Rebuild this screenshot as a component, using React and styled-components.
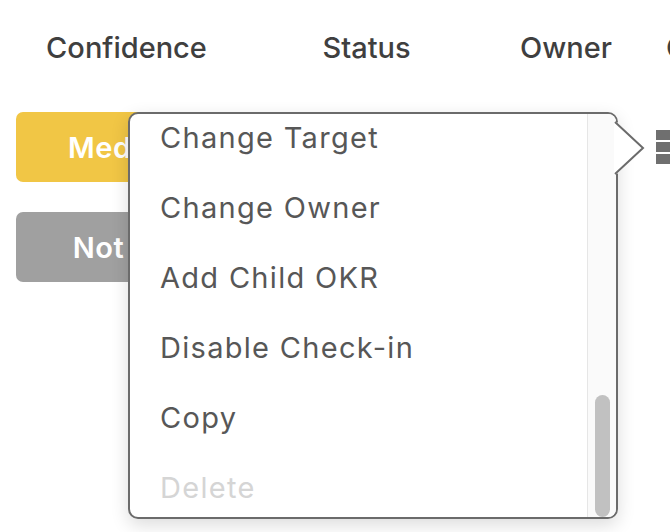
import React from "react";
import styled, { createGlobalStyle } from "styled-components";

const Global = createGlobalStyle`
  html, body { margin: 0; padding: 0; background: #ffffff; }
  body { overflow: hidden; width: 670px; height: 532px; font-family: Inter, "Open Sans", sans-serif; }
  #root { width: 670px; height: 532px; }
`;

const Page = styled.div`
  position: relative;
  width: 670px;
  height: 532px;
  padding: 0 0 0 16px;
  box-sizing: border-box;
  overflow: hidden;
`;

const Grid = styled.div`
  display: grid;
  grid-template-columns: 221px 219px 140px 60px;
  column-gap: 20px;
  align-items: center;
`;

const HeaderRow = styled(Grid)`
  height: 96px;
  margin-bottom: 16px;
`;

const HeaderCell = styled.div`
  font-size: 29px;
  font-weight: 500;
  color: #3f3f3f;
  line-height: 1.2;
  white-space: nowrap;
  text-align: ${(p) => (p.$left ? "left" : "center")};
  padding-left: ${(p) => (p.$left ? "10px" : "0")};
`;

const Rows = styled.div`
  display: flex;
  flex-direction: column;
  gap: 30px;
`;

const Row = styled(Grid)`
  height: 70px;
`;

const Pill = styled.div`
  height: 70px;
  border-radius: 7px;
  background: ${(p) => p.$bg};
  color: #ffffff;
  font-size: 29px;
  font-weight: 600;
  letter-spacing: 0.6px;
  display: flex;
  align-items: center;
  justify-content: center;
  white-space: nowrap;
`;

const Kebab = styled.div`
  display: flex;
  flex-direction: column;
  gap: 2.5px;
  width: 16px;
`;

const Dot = styled.span`
  display: block;
  width: 16px;
  height: 9.5px;
  background: #6f6f6f;
`;

const Menu = styled.div`
  position: absolute;
  left: 128px;
  top: 112px;
  width: 490px;
  height: 407px;
  box-sizing: border-box;
  border: 2px solid #6b6b6b;
  border-radius: 10px;
  background: #ffffff;
  box-shadow: 0 6px 18px rgba(0, 0, 0, 0.14);
  display: flex;
`;

const Arrow = styled.svg`
  position: absolute;
  left: 100%;
  top: 7px;
  overflow: visible;
`;

const List = styled.div`
  flex: 1;
  display: flex;
  flex-direction: column;
  justify-content: flex-end;
  overflow: hidden;
  border-radius: 8px 0 0 8px;
`;

const Item = styled.div`
  flex: none;
  height: 70px;
  box-sizing: border-box;
  padding: 0 0 0 30px;
  font-size: 29px;
  font-weight: 400;
  letter-spacing: 1.3px;
  line-height: 70px;
  color: ${(p) => (p.$disabled ? "#d5d5d5" : "#575757")};
  white-space: nowrap;
  position: relative;
  top: 6px;
`;

const Track = styled.div`
  width: 29px;
  flex: none;
  box-sizing: border-box;
  border-left: 1px solid #e6e6e6;
  background: #fafafa;
  border-radius: 0 8px 8px 0;
  display: flex;
  flex-direction: column;
  justify-content: flex-end;
  padding: 0 6px 0 7px;
`;

const Thumb = styled.div`
  height: 122px;
  border-radius: 8px;
  background: #c1c1c1;
`;

const items = [
  "Change Target",
  "Change Owner",
  "Add Child OKR",
  "Disable Check-in",
  "Copy",
];

export default function App() {
  return (
    <>
      <Global />
      <Page>
        <HeaderRow>
          <HeaderCell>Confidence</HeaderCell>
          <HeaderCell>Status</HeaderCell>
          <HeaderCell>Owner</HeaderCell>
          <HeaderCell $left>Check-in</HeaderCell>
        </HeaderRow>
        <Rows>
          <Row>
            <Pill $bg="#f1c645">Medium</Pill>
            <div />
            <div />
            <Kebab>
              <Dot />
              <Dot />
              <Dot />
            </Kebab>
          </Row>
          <Row>
            <Pill $bg="#a0a0a0">Not Set</Pill>
          </Row>
        </Rows>
        <Menu>
          <List>
            {items.map((t) => (
              <Item key={t}>{t}</Item>
            ))}
            <Item $disabled>Delete</Item>
          </List>
          <Track>
            <Thumb />
          </Track>
          <Arrow width="30" height="56" viewBox="0 0 30 56">
            <path d="M-2 1 L1 1 L27 27 L1 53 L-2 53 Z" fill="#ffffff" />
            <path d="M-1 1 L27 27 L-1 53" fill="none" stroke="#6b6b6b" strokeWidth="2" />
          </Arrow>
        </Menu>
      </Page>
    </>
  );
}
